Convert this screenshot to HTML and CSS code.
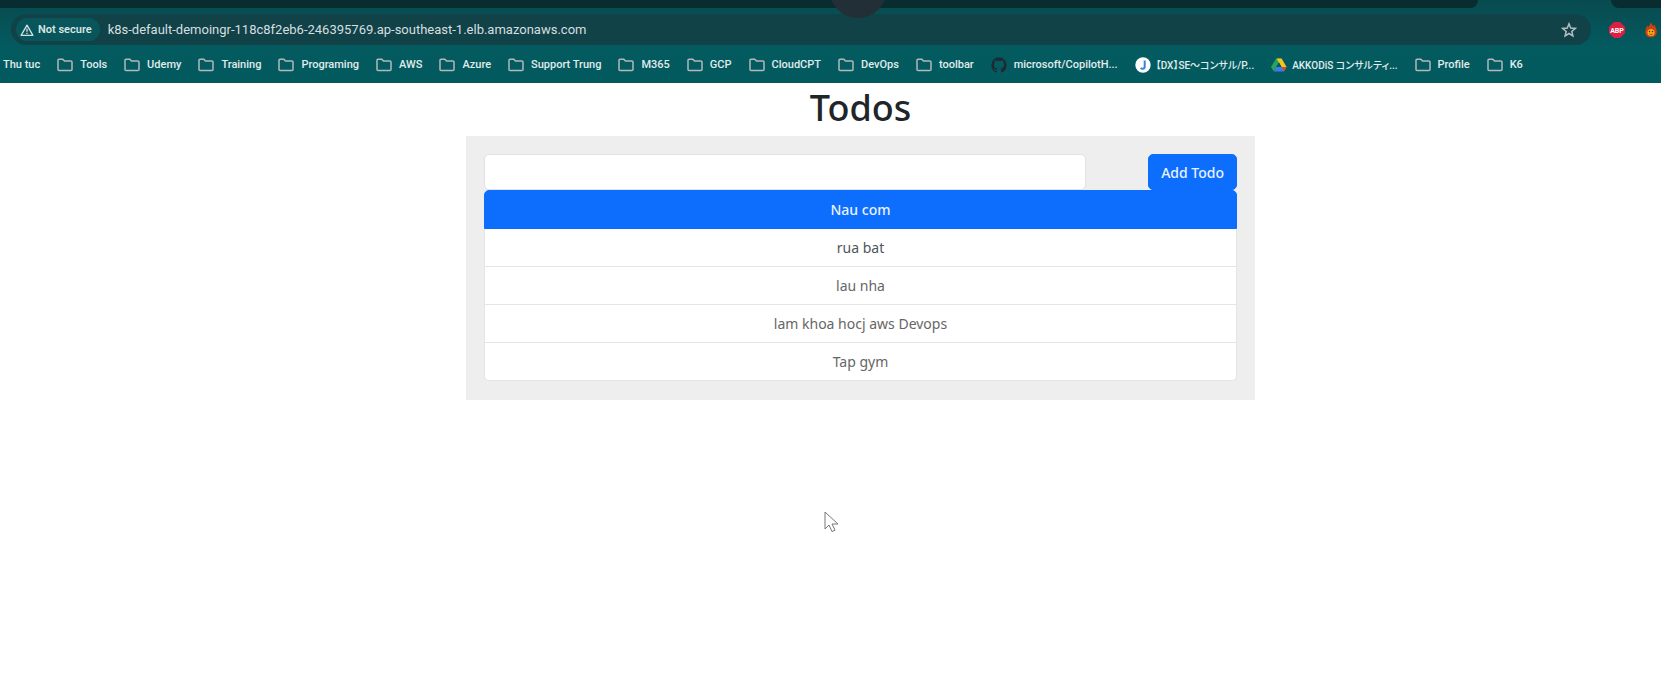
FILE: index.html
```html
<!DOCTYPE html>
<html lang="en">
<head>
<meta charset="utf-8">
<title>Todos</title>
<link rel="stylesheet" href="styles.css">
</head>
<body>
<svg class="defs" aria-hidden="true">
  <symbol id="folder" viewBox="0 0 16 14"><path d="M1 2.200C1 1.600 1.400 1.200 2 1.200h3.800l1.700 1.900h6.400c.6 0 1.100.4 1.100 1v7.500c0 .6-.5 1-1.100 1H2c-.6 0-1-.4-1-1z" fill="none" stroke="#b3b8ba" stroke-width="1.500"/></symbol>
</svg>
<header class="browser">
  <div class="tabstrip"><div class="tabs-left"></div><div class="tabs-right"></div></div>
  <span class="bubble"></span>
  <div class="toolbar">
    <div class="omnibox">
      <button class="security" type="button">
        <svg width="14" height="12" viewBox="0 0 14 12"><path d="M7 1.200 12.900 11.300H1.100z" fill="none" stroke="#d5e0e0" stroke-width="1.300" stroke-linejoin="round"/><path d="M7 4.600v3.200M7 8.700v1.300" stroke="#d5e0e0" stroke-width="1.300"/></svg>
        <span>Not secure</span>
      </button>
      <input class="url" type="text" aria-label="Address" value="k8s-default-demoingr-118c8f2eb6-246395769.ap-southeast-1.elb.amazonaws.com">
      <button class="icon-button" type="button" aria-label="Bookmark this page">
        <svg width="16" height="16" viewBox="0 0 16 16"><path d="M8 1.800 9.700 6l4.600.4-3.500 3 1.100 4.500L8 11.500l-3.900 2.400 1.100-4.500-3.500-3L6.300 6z" fill="none" stroke="#b4bec2" stroke-width="1.500"/></svg>
      </button>
    </div>
    <div class="extensions">
      <button class="icon-button" type="button" aria-label="ABP">
        <svg width="16" height="16" viewBox="0 0 16 16"><path d="M5 0h6l5 5v6l-5 5H5l-5-5V5z" fill="#dc1f43"/><text class="abp" x="8" y="10.500" text-anchor="middle">ABP</text></svg>
      </button>
      <button class="icon-button" type="button" aria-label="Flame extension">
        <svg width="12" height="16" viewBox="0 0 12 16"><path d="M6 0c.3 2.200 1.600 2.700 2.300 4l1.300-1.200C9.800 5 12 6.800 11.800 10c-.2 3.300-2.600 5.300-5.800 5.300S.3 13.300.2 10C.1 7.300 1.800 6.500 2 3.600l1.500 1.300C4 3.500 5.600 2.500 6 0z" fill="#c9410f"/><circle cx="6" cy="10.500" r="3.600" fill="#f4a51c"/><circle cx="4.500" cy="9.500" r=".7" fill="#4b2909"/><circle cx="7.500" cy="9.500" r=".7" fill="#4b2909"/><path d="M4.500 11.800c1 1 2 1 3 0" fill="none" stroke="#7a310a" stroke-width=".8"/></svg>
      </button>
    </div>
  </div>
  <nav class="bookmarks" aria-label="Bookmarks">
    <a href="#">Thu tuc</a>
    <a href="#"><svg class="folder"><use href="#folder"/></svg>Tools</a>
    <a href="#"><svg class="folder"><use href="#folder"/></svg>Udemy</a>
    <a href="#"><svg class="folder"><use href="#folder"/></svg>Training</a>
    <a href="#"><svg class="folder"><use href="#folder"/></svg>Programing</a>
    <a href="#"><svg class="folder"><use href="#folder"/></svg>AWS</a>
    <a href="#"><svg class="folder"><use href="#folder"/></svg>Azure</a>
    <a href="#"><svg class="folder"><use href="#folder"/></svg>Support Trung</a>
    <a href="#"><svg class="folder"><use href="#folder"/></svg>M365</a>
    <a href="#"><svg class="folder"><use href="#folder"/></svg>GCP</a>
    <a href="#"><svg class="folder"><use href="#folder"/></svg>CloudCPT</a>
    <a href="#"><svg class="folder"><use href="#folder"/></svg>DevOps</a>
    <a href="#"><svg class="folder"><use href="#folder"/></svg>toolbar</a>
    <a href="#"><svg class="site" viewBox="0 0 16 16"><path d="M8 .2a8 8 0 0 0-2.500 15.400c.4.100.5-.2.500-.4v-1.400c-2.200.5-2.700-1-2.700-1-.4-.9-.9-1.200-.9-1.200-.7-.5.100-.5.100-.5.800.1 1.200.8 1.200.8.700 1.200 1.900.9 2.300.7.100-.5.300-.9.500-1.100-1.800-.2-3.600-.9-3.600-4 0-.9.300-1.600.8-2.100-.1-.2-.4-1 .1-2.100 0 0 .7-.2 2.200.8a7.500 7.500 0 0 1 4 0c1.500-1 2.200-.8 2.200-.8.400 1.100.2 1.900.1 2.100.5.500.8 1.200.8 2.100 0 3.100-1.900 3.800-3.700 4 .3.200.6.700.6 1.500v2.200c0 .2.100.5.500.4A8 8 0 0 0 8 .2z" fill="#20292f"/></svg>microsoft/CopilotH...</a>
    <a class="jp" href="#"><svg class="site" viewBox="0 0 16 16"><circle cx="8" cy="8" r="7.700" fill="#fff"/><path d="M9.700 3.500v5.900c0 1.500-.8 2.300-2 2.300-.8 0-1.500-.3-2-.9" fill="none" stroke="#3f7ce4" stroke-width="2"/></svg>【DX】SE～コンサル/P...</a>
    <a class="jp" href="#"><svg class="site" viewBox="0 0 16 16"><path d="M5.200 1.500h5.200L5.300 10 2.700 14.200 0 10z" fill="#27a35a"/><path d="M5.600 1.500h5L15.600 10h-5.100z" fill="#f6c51c"/><path d="M5.300 10h10.300L13 14.400H2.700z" fill="#3c7ce8"/><path d="M10.500 10h5.100L13 14.400z" fill="#df4534"/><path d="M8 5.400 5.300 10h5.200z" fill="#035a5f"/></svg>AKKODiS コンサルティ...</a>
    <a href="#"><svg class="folder"><use href="#folder"/></svg>Profile</a>
    <a href="#"><svg class="folder"><use href="#folder"/></svg>K6</a>
  </nav>
</header>
<main class="page">
  <h1>Todos</h1>
  <section class="panel">
    <form class="todo-form">
      <input class="todo-input" type="text" aria-label="New todo">
      <button class="add" type="button">Add Todo</button>
    </form>
    <ul class="todo-list">
      <li class="active">Nau com</li>
      <li class="next">rua bat</li>
      <li>lau nha</li>
      <li>lam khoa hocj aws Devops</li>
      <li>Tap gym</li>
    </ul>
  </section>
</main>
<svg class="cursor" width="15" height="22" viewBox="0 0 15 22" aria-hidden="true"><path d="M1 1v17l4-4 3 6.500 3-1.300-3-6.200h6z" fill="#fff" stroke="#777" stroke-width="1"/></svg>
</body>
</html>
```
FILE: styles.css
```css
* { box-sizing: border-box; }
body {
  margin: 0;
  background: #fff;
  color: #212529;
  font-family: "Noto Sans", "Noto Sans CJK JP", sans-serif;
}
button, input { font: inherit; }
button { border: 0; padding: 0; background: none; cursor: pointer; }
svg { flex: none; display: block; }
.defs { position: absolute; width: 0; height: 0; }

.browser {
  position: relative;
  overflow: hidden;
  height: 83px;
  background: linear-gradient(#074b50 0, #074f54 14px, #035a5f 45px, #025a5f);
  color: #e0ecec;
  font-family: Roboto, "Noto Sans CJK JP", sans-serif;
}
.tabstrip { display: flex; justify-content: space-between; height: 8px; }
.tabs-left { width: 89%; background: #082c30; border-radius: 0 0 10px 0; }
.tabs-right { width: 3%; background: #082c30; border-radius: 0 0 0 10px; }
.bubble {
  position: absolute;
  z-index: 1;
  top: -40px;
  left: calc(50% - 2px);
  width: 58px;
  height: 58px;
  border-radius: 50%;
  background: #232f36;
}
.toolbar { display: flex; gap: 18px; padding: 6px 4px 0 11px; }
.omnibox {
  flex: 1;
  display: flex;
  align-items: center;
  height: 31px;
  padding: 0 14px 0 5px;
  border-radius: 16px;
  background: #104247;
}
.security {
  display: flex;
  align-items: center;
  gap: 4px;
  height: 23px;
  padding: 0 8px 0 4px;
  border-radius: 12px;
  background: #08565b;
  color: #d8e4e4;
  font-size: 11px;
  font-weight: 600;
}
.url {
  flex: 1;
  min-width: 0;
  margin-left: 8px;
  padding: 0;
  border: 0;
  outline: 0;
  background: none;
  color: #d5dfe0;
  font-size: 13px;
}
.extensions { display: flex; align-items: center; gap: 20px; }
.abp { fill: #fff; font-size: 7px; font-weight: 700; }
.bookmarks {
  display: flex;
  align-items: center;
  gap: 17px;
  height: 39px;
  padding-left: 3px;
  white-space: nowrap;
}
.bookmarks a {
  display: flex;
  align-items: center;
  gap: 7px;
  color: #e0ecec;
  font-size: 11px;
  font-weight: 500;
  font-feature-settings: "palt";
  text-decoration: none;
}
.bookmarks .jp { gap: 5px; font-size: 10px; }
.folder { width: 16px; height: 14px; }
.site { width: 16px; height: 16px; }

.page { padding: 2px 0 0 60px; text-align: center; }
h1 { margin: 0 0 6px; font-size: 36px; line-height: 45px; font-weight: 500; }
.panel { width: 789px; max-width: 100%; margin: 0 auto; padding: 18px; background: #eee; }
.todo-form { display: flex; justify-content: space-between; }
.todo-input {
  width: 80%;
  height: 36px;
  padding: 6px 12px;
  border: 1px solid #dee2e6;
  border-radius: 5px;
  background: #fff;
  font-size: 14px;
}
.add {
  padding: 0 12px;
  border: 1px solid #0d6efd;
  border-radius: 5px;
  background: #0d6efd;
  color: #e9f2ff;
  font-size: 14px;
  font-weight: 500;
}
.todo-list {
  margin: 0;
  padding: 0 0 1px;
  list-style: none;
  font-size: 14px;
  color: #666;
}
.todo-list li {
  line-height: 37px;
  border: 1px solid #e3e5e7;
  border-top: 0;
  background: #fff;
}
.todo-list .active {
  border: 1px solid #0d6efd;
  border-radius: 5px 5px 0 0;
  background: #0d6efd;
  color: #e9f2ff;
  font-weight: 500;
}
.todo-list .next { color: #50555a; }
.todo-list li:last-child { border-radius: 0 0 5px 5px; }
.cursor { position: absolute; left: 824px; top: 511px; }
```
